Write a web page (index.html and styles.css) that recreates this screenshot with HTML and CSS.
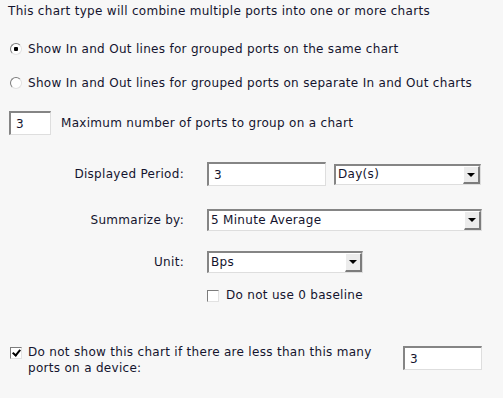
FILE: index.html
```html
<!DOCTYPE html>
<html>
  <head>
    <title>Grouped Ports Chart</title>
    <link rel="stylesheet" href="styles.css">
  </head>
  <body>
    <p class="intro">This chart type will combine multiple ports into one or more charts</p>

    <label class="choice first">
      <input type="radio" name="lines" checked>
      <span>Show In and Out lines for grouped ports on the same chart</span>
    </label>
    <label class="choice second">
      <input type="radio" name="lines">
      <span>Show In and Out lines for grouped ports on separate In and Out charts</span>
    </label>

    <div class="group">
      <input class="text small" type="text" value="3">
      <span>Maximum number of ports to group on a chart</span>
    </div>

    <section class="fields">
      <div class="row period">
        <span class="label">Displayed Period:</span>
        <div class="controls">
          <input class="text period-value" type="text" value="3">
          <div class="select period-unit">
            <span class="value">Day(s)</span>
            <span class="arrow"></span>
          </div>
        </div>
      </div>
      <div class="row summarize">
        <span class="label">Summarize by:</span>
        <div class="controls">
          <div class="select wide">
            <span class="value">5 Minute Average</span>
            <span class="arrow"></span>
          </div>
        </div>
      </div>
      <div class="row unit">
        <span class="label">Unit:</span>
        <div class="controls">
          <div class="select medium">
            <span class="value">Bps</span>
            <span class="arrow"></span>
          </div>
        </div>
      </div>
      <div class="row baseline">
        <span class="label"></span>
        <label class="check-row">
          <input type="checkbox">
          <span>Do not use 0 baseline</span>
        </label>
      </div>
    </section>

    <div class="minimum">
      <label class="check-row top">
        <input type="checkbox" checked>
        <span class="wrap">Do not show this chart if there are less than this many ports on a device:</span>
      </label>
      <input class="text min-value" type="text" value="3">
    </div>
  </body>
</html>
```

FILE: styles.css
```css
body{
  margin:0;
  padding:0 8px;
  background:#f7f7f7;
  color:#14142e;
  font-family: "DejaVu Sans", Verdana, sans-serif;
  font-size:12px;
  line-height:15px;
  letter-spacing:0.3px;
}
.intro{
  margin:4px 0 0;
}
.choice{
  display:flex;
  align-items:center;
  height:20px;
  padding-left:2px;
}
.choice.first{ margin-top:20px; }
.choice.second{ margin-top:14px; }
.choice input{
  appearance:none;
  width:12px;
  height:12px;
  margin:0 6px 0 0;
  border-radius:50%;
  border:1px solid;
  border-color:#7c7c7c #e2e2e2 #e2e2e2 #7c7c7c;
  background:#fff;
  flex:none;
}
.choice input:checked{
  background:radial-gradient(circle, #000 0 2px, #fff 2.5px);
}
.text{
  box-sizing:border-box;
  height:24px;
  margin:0;
  padding:0 5px;
  border-style:solid;
  border-width:2px 1px 1px 2px;
  border-color:#858585 #dedede #dedede #858585;
  background:#fff;
  color:#14142e;
  font:inherit;
  outline:none;
}
.group{
  display:flex;
  align-items:center;
  margin-top:18px;
  padding-left:1px;
}
.group .small{
  width:42px;
  margin-right:10px;
}
.fields{
  margin-top:27px;
}
.row{
  display:grid;
  grid-template-columns:176px 1fr;
  column-gap:23px;
  align-items:center;
}
.label{
  text-align:right;
}
.controls{
  display:flex;
  align-items:center;
}
.row.summarize{ margin-top:23px; }
.row.unit{ margin-top:20px; }
.row.baseline{ margin-top:15px; }
.period-value{
  width:119px;
  margin-right:8px;
}
.select{
  box-sizing:border-box;
  display:flex;
  align-items:center;
  height:22px;
  padding-left:2px;
  border-style:solid;
  border-width:2px 1px 1px 2px;
  border-color:#858585 #dedede #dedede #858585;
  background:#fff;
}
.select .value{
  flex:1;
}
.select .arrow{
  box-sizing:border-box;
  position:relative;
  width:17px;
  height:19px;
  background:#ececec;
  border-style:solid;
  border-width:1px 2px 2px 1px;
  border-color:#fff #7c7c7c #7c7c7c #fff;
}
.select .arrow::after{
  content:"";
  position:absolute;
  left:3px;
  top:6px;
  border-left:4px solid transparent;
  border-right:4px solid transparent;
  border-top:4px solid #000;
}
.period-unit{ width:147px; height:21px; }
.period-unit .arrow{ height:18px; }
.wide{ width:275px; }
.medium{ width:156px; }
.check-row{
  display:flex;
  align-items:center;
}
.check-row input{
  appearance:none;
  position:relative;
  width:12px;
  height:12px;
  margin:0 7px 0 0;
  border:1px solid;
  border-color:#7c7c7c #e2e2e2 #e2e2e2 #7c7c7c;
  background:#fff;
  flex:none;
}
.check-row input:checked::after{
  content:"";
  position:absolute;
  left:3px;
  top:0;
  width:3px;
  height:6px;
  border:solid #000;
  border-width:0 2px 2px 0;
  transform:rotate(40deg);
}
.minimum{
  display:flex;
  align-items:flex-start;
  margin-top:41px;
  padding-left:2px;
}
.check-row.top{
  align-items:flex-start;
  width:373px;
  line-height:16px;
}
.check-row.top input{
  margin:3px 6px 0 0;
}
.min-value{
  width:79px;
  margin:2px 0 0 20px;
}
```
